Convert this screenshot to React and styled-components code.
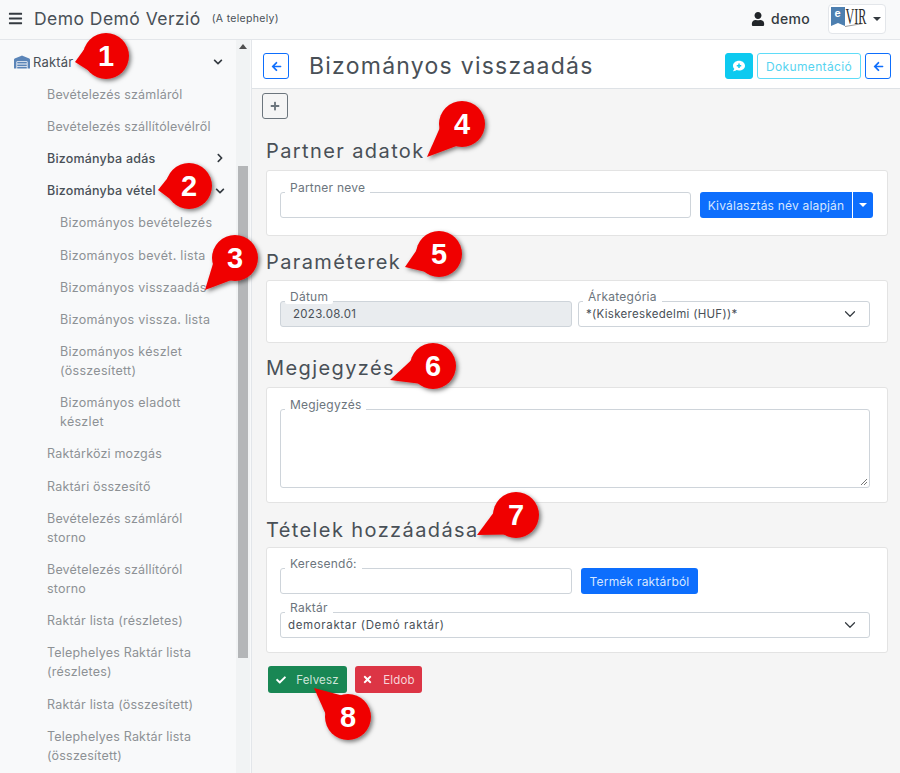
import React from 'react';
import styled, { createGlobalStyle } from 'styled-components';
import { FaBars, FaUser, FaWarehouse, FaChevronDown, FaChevronRight, FaArrowLeft, FaPlus, FaCheck, FaTimes, FaCommentMedical } from 'react-icons/fa';
import { ChevronDown } from 'lucide-react';

const Global = createGlobalStyle`
  html, body { margin: 0; padding: 0; }
  body { font-family: "Inter", "Noto Sans", sans-serif; color: #212529; background: #f5f5f5; }
  * { box-sizing: border-box; }
`;
const Page = styled.div`position: relative; width: 900px; height: 773px; overflow: hidden; display: flex; flex-direction: column;`;
const Topbar = styled.header`height: 40px; flex: none; background: #f8f9fa; border-bottom: 1px solid #e3e6ea; display: flex; align-items: center; padding: 0 14px 2px 8px;`;
const Burger = styled.span`display: flex; font-size: 15px; color: #343a40; margin-right: 11px;`;
const Brand = styled.span`font-size: 17.5px; color: #495057; letter-spacing: .45px; margin-right: 11px;`;
const Site = styled.span`font-size: 10.5px; color: #495057; letter-spacing: .3px; flex: 1;`;
const UserName = styled.span`display: flex; align-items: center; gap: 6px; font-size: 14px; font-weight: 500; letter-spacing: .3px; color: #343a40; margin-right: 18px;`;
const LogoButton = styled.div`width: 58px; height: 30px; background: #fff; border: 1px solid #e3e6ea; border-radius: 4px; display: flex; align-items: center; padding-left: 2px; gap: 4px;`;
const LogoMark = styled.svg`flex: none; overflow: visible;`;
const Caret = styled.span`width: 0; height: 0; border-left: 4px solid transparent; border-right: 4px solid transparent; border-top: 4px solid ${p => p.$color || '#343a40'};`;
const Body = styled.div`flex: 1; display: flex; min-height: 0;`;
const Sidebar = styled.aside`position: relative; width: 252px; flex: none; background: #f8f9fa; border-right: 1px solid #e3e6ea; padding: 5px 0 0 0; overflow: hidden;`;
const Track = styled.div`position: absolute; top: 0; right: 1px; bottom: 0; width: 14px; background: #f1f3f4;`;
const Thumb = styled.div`position: absolute; top: 126px; left: 2px; width: 10px; height: 492px; background: #b4b6b8;`;
const ArrowUp = styled.span`position: absolute; top: 4px; left: 3px; width: 0; height: 0; border-left: 4px solid transparent; border-right: 4px solid transparent; border-bottom: 5px solid #505050;`;
const TopItem = styled.div`display: flex; align-items: center; height: 33px; padding: 0 28px 0 14px; font-size: 13px; color: #495057; letter-spacing: .2px; gap: 3px;`;
const Label = styled.span`flex: 1;`;
const LabelText = styled.span`display: block; max-width: ${p => p.$sub ? 156 : 170}px;`;
const Item = styled.div`display: flex; align-items: center; width: 238px; padding: 6.6px 13px 6.6px ${p => p.$sub ? 60 : 47}px; font-size: 12.5px; line-height: 19px; letter-spacing: ${p => p.$sub ? '.3px' : '.2px'}; color: ${p => p.$open ? '#495057' : '#8d9195'}; font-weight: ${p => p.$open ? 500 : 400};`;
const Main = styled.main`flex: 1; min-width: 0; background: #f5f5f5;`;
const PageHead = styled.div`height: 49px; background: #fff; border-bottom: 1px solid #dee2e6; display: flex; align-items: center; padding: 4px 9px 0 11px;`;
const IconButton = styled.button`width: ${p => p.$w || 26}px; height: 26px; padding: 0; display: flex; align-items: center; justify-content: center; background: ${p => p.$fill || 'transparent'}; border: 1px solid ${p => p.$color}; color: ${p => p.$text || p.$color}; border-radius: 3px; font-size: 11px;`;
const Title = styled.h1`flex: 1; margin: 0 0 0 20px; font-size: 23px; font-weight: 400; letter-spacing: 1.25px; color: #495057;`;
const Doc = styled.button`width: 104px; height: 26px; padding: 0; margin: 0 4px; background: transparent; border: 1px solid #5fdcf8; color: #56d4f0; border-radius: 3px; font: 400 12px "Inter", sans-serif; letter-spacing: .35px;`;
const Content = styled.div`padding: 4px 12px 0 14px;`;
const AddWrap = styled.div`margin-left: -4px;`;
const Heading = styled.h2`margin: ${p => p.$top}px 0 ${p => p.$bottom}px; font-size: 20px; line-height: 24px; font-weight: 400; letter-spacing: 1.4px; color: #495057;`;
const Card = styled.section`background: #fff; border: 1px solid #e3e3e3; border-radius: 3px; padding: ${p => p.$top}px 17px ${p => p.$bottom}px 13px; display: grid; gap: 18px;`;
const Row = styled.div`display: flex; gap: ${p => p.$gap}px; align-items: flex-start; margin-right: ${p => p.$out || 0}px;`;
const Field = styled.div`position: relative; flex: ${p => p.$w ? `0 0 ${p.$w}px` : 1}; height: ${p => p.$h || 26}px; background: ${p => p.$off ? '#e9ecef' : '#fff'}; border: 1px solid #ced4da; border-radius: 3px; display: flex; align-items: center; padding: 0 ${p => p.$pad || 7}px 0 ${p => p.$left || 7}px; font-size: 11.5px; color: #495057; letter-spacing: .3px;`;
const Legend = styled.span`position: absolute; top: -12px; left: 4px; padding: 0 5px; background: #fff; font-size: 12px; line-height: 14px; color: #6c757d; letter-spacing: .25px; border-radius: 2px;`;
const Value = styled.span`flex: 1; letter-spacing: ${p => p.$spacing || '.3px'};`;
const Grip = styled.svg`position: absolute; right: 1px; bottom: 1px;`;
const Split = styled.div`display: flex; height: 26px;`;
const Primary = styled.button`width: ${p => p.$w}px; height: 26px; padding: 0; background: #0d6efd; color: #d6e6ff; border: 0; border-radius: ${p => p.$split ? '3px 0 0 3px' : '3px'}; font: 400 12px "Inter", sans-serif; letter-spacing: .2px; white-space: nowrap;`;
const SplitEnd = styled.button`width: 20px; height: 26px; padding: 0; margin-left: 1px; display: flex; align-items: center; justify-content: center; background: #0d6efd; border: 0; border-radius: 0 3px 3px 0;`;
const Actions = styled.div`display: flex; gap: 8px; margin: 13px 0 0 2px;`;
const Action = styled.button`height: 27px; width: ${p => p.$w}px; display: flex; align-items: center; justify-content: center; gap: 10px; border: 0; border-radius: 3px; background: ${p => p.$bg}; color: ${p => p.$text}; font: 400 11.5px "Inter", sans-serif; letter-spacing: .2px;`;
const Callout = styled.svg`position: absolute; left: 0; top: 0; pointer-events: none;`;
const CalloutText = styled.text`font: 700 29px "Liberation Sans", sans-serif; fill: #fff; text-anchor: middle;`;

const callouts = [
  [1, 106, 56, 75, 62], [2, 189, 186, 158, 190], [3, 235, 258, 205, 290], [4, 462, 124, 427, 157],
  [5, 439, 254, 405, 267], [6, 433, 366, 390, 380], [7, 516, 515, 477, 535], [8, 348, 717, 314, 688],
];
function tail(cx, cy, tx, ty) {
  const a = Math.atan2(ty - cy, tx - cx), r = 22, s = 0.62;
  return `M${cx + r * Math.cos(a - s)} ${cy + r * Math.sin(a - s)} L${tx} ${ty} L${cx + r * Math.cos(a + s)} ${cy + r * Math.sin(a + s)}Z`;
}
const menu = [
  ['Bevételezés számláról'], ['Bevételezés szállítólevélről'], ['Bizományba adás', 'open', 'right'], ['Bizományba vétel', 'open', 'down'],
  ['Bizományos bevételezés', 'sub'], ['Bizományos bevét. lista', 'sub'], ['Bizományos visszaadás', 'sub'], ['Bizományos vissza. lista', 'sub'],
  ['Bizományos készlet (összesített)', 'sub'], ['Bizományos eladott készlet', 'sub'], ['Raktárközi mozgás'], ['Raktári összesítő'],
  ['Bevételezés számláról storno'], ['Bevételezés szállítóról storno'], ['Raktár lista (részletes)'], ['Telephelyes Raktár lista (részletes)'],
  ['Raktár lista (összesített)'], ['Telephelyes Raktár lista (összesített)'],
];
const Chevron = () => <FaChevronDown size={10} color="#343a40" />;
const Logo = () => (
  <LogoMark width="38" height="32" viewBox="0 -3 38 32">
    <path d="M14 20l18-3v1l-18 3z" fill="#9a9a9a" />
    <path d="M0 1h14v19L7 17 0 20z" fill="#4d7fb0" />
    <text x="3.5" y="11" fontSize="11" fontFamily="Liberation Sans" fontWeight="700" fill="#fff">e</text>
    <text x="14.5" y="18" fontSize="23" fontFamily="Liberation Serif" fill="#2b2b2b" textLength="21" lengthAdjust="spacingAndGlyphs">VIR</text>
  </LogoMark>
);
const SelectArrow = () => <ChevronDown size={18} color="#343a40" strokeWidth={1.6} />;

export default function App() {
  return (
    <Page>
      <Global />
      <Topbar>
        <Burger><FaBars /></Burger>
        <Brand>Demo Demó Verzió</Brand>
        <Site>(A telephely)</Site>
        <UserName><FaUser size={14} color="#212529" />demo</UserName>
        <LogoButton><Logo /><Caret /></LogoButton>
      </Topbar>
      <Body>
        <Sidebar>
          <TopItem><FaWarehouse size={16} color="#5b85b8" /><Label>Raktár</Label><Chevron /></TopItem>
          {menu.map(([t, kind, arrow]) => (
            <Item key={t} $open={kind === 'open'} $sub={kind === 'sub'}>
              <Label><LabelText $sub={kind === 'sub'}>{t}</LabelText></Label>
              {arrow === 'right' && <FaChevronRight size={10} color="#343a40" />}
              {arrow === 'down' && <Chevron />}
            </Item>
          ))}
          <Track><ArrowUp /><Thumb /></Track>
        </Sidebar>
        <Main>
          <PageHead>
            <IconButton $color="#0d6efd"><FaArrowLeft /></IconButton>
            <Title>Bizományos visszaadás</Title>
            <IconButton $w={28} $color="#0dcaf0" $fill="#0dcaf0" $text="#fff"><FaCommentMedical size={12} /></IconButton>
            <Doc>Dokumentáció</Doc>
            <IconButton $color="#0d6efd"><FaArrowLeft /></IconButton>
          </PageHead>
          <Content>
            <AddWrap><IconButton $color="#6c757d"><FaPlus size={10} /></IconButton></AddWrap>
            <Heading $top={20} $bottom={7}>Partner adatok</Heading>
            <Card $top={21} $bottom={17}>
              <Row $gap={9} $out={-3}>
                <Field><Legend>Partner neve</Legend></Field>
                <Split><Primary $split $w={152}>Kiválasztás név alapján</Primary><SplitEnd><Caret $color="#fff" /></SplitEnd></Split>
              </Row>
            </Card>
            <Heading $top={14} $bottom={6}>Paraméterek</Heading>
            <Card $top={20} $bottom={15}>
              <Row $gap={6}>
                <Field $w={292} $off $left={12}><Legend>Dátum</Legend>2023.08.01</Field>
                <Field $pad={10}><Legend>Árkategória</Legend><Value>*(Kiskereskedelmi (HUF))*</Value><SelectArrow /></Field>
              </Row>
            </Card>
            <Heading $top={13} $bottom={7}>Megjegyzés</Heading>
            <Card $top={21} $bottom={14}>
              <Field $h={79}><Legend>Megjegyzés</Legend>
                <Grip width="8" height="8" viewBox="0 0 8 8"><path d="M7 1L1 7M7 4L4 7" stroke="#777" strokeWidth="1" /></Grip>
              </Field>
            </Card>
            <Heading $top={15} $bottom={5}>Tételek hozzáadása</Heading>
            <Card $top={20} $bottom={14}>
              <Row $gap={9}>
                <Field $w={292}><Legend>Keresendő:</Legend></Field>
                <Primary $w={117}>Termék raktárból</Primary>
              </Row>
              <Field $pad={10}><Legend>Raktár</Legend><Value $spacing=".65px">demoraktar (Demó raktár)</Value><SelectArrow /></Field>
            </Card>
            <Actions>
              <Action $w={79} $bg="#198754" $text="#cfe5da"><FaCheck size={10} color="#fff" />Felvesz</Action>
              <Action $w={67} $bg="#dc3545" $text="#f7d4d8"><FaTimes size={11} color="#fff" />Eldob</Action>
            </Actions>
          </Content>
        </Main>
      </Body>
      <Callout width="900" height="773" viewBox="0 0 900 773">
        <defs>
          <filter id="sh" x="-30%" y="-30%" width="160%" height="160%"><feDropShadow dx="2" dy="2" stdDeviation="2" floodColor="#000" floodOpacity=".5" /></filter>
        </defs>
        {callouts.map(([n, cx, cy, tx, ty]) => (
          <g key={n}>
            <g filter="url(#sh)" fill="#f00000">
              <path d={tail(cx, cy, tx, ty)} />
              <circle cx={cx} cy={cy} r="23" />
            </g>
            <CalloutText x={cx} y={cy + 10}>{n}</CalloutText>
          </g>
        ))}
      </Callout>
    </Page>
  );
}
